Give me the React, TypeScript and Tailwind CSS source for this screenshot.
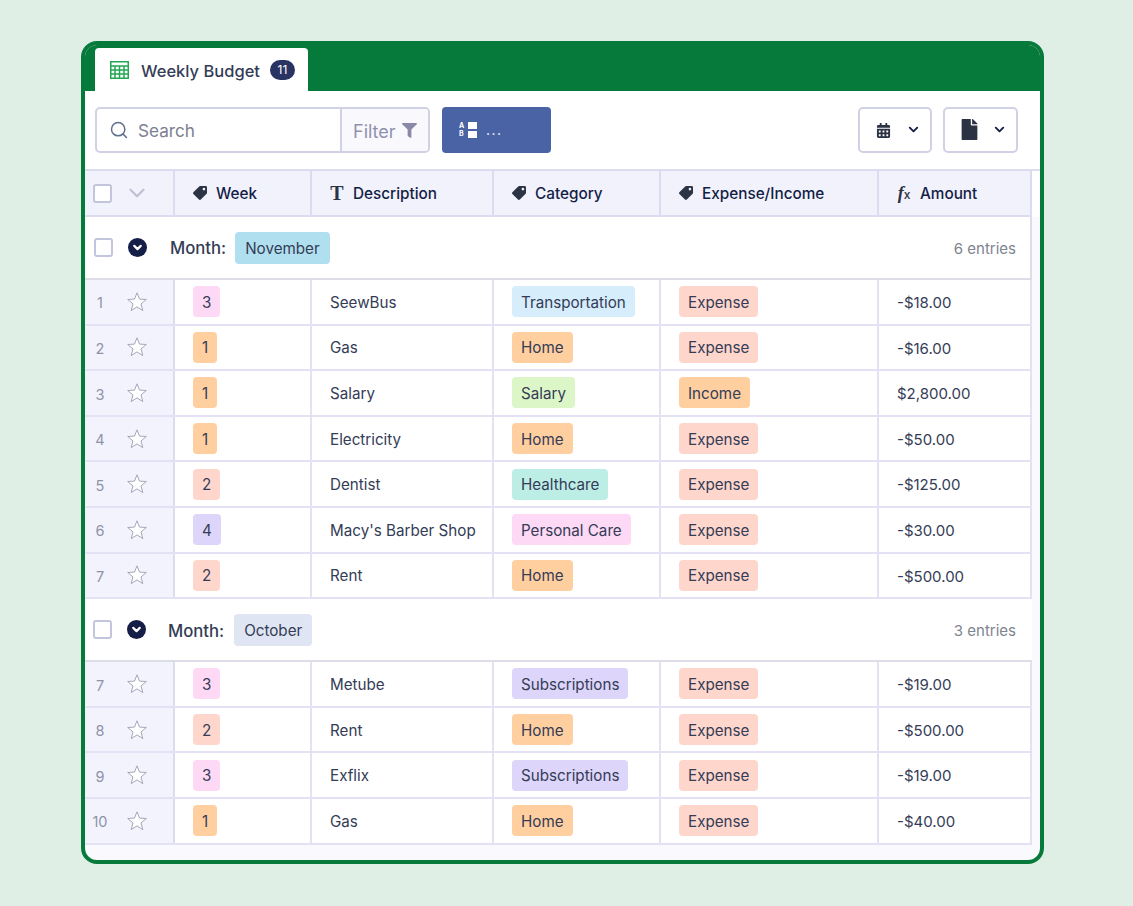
import { ChevronDown, Search } from "lucide-react";
import { FaCalendarAlt, FaFile, FaFilter, FaTag } from "react-icons/fa";

const cols = "grid grid-cols-[90px_137px_182px_167px_218px_153px]";

const pill: Record<string, string> = {
  "1": "bg-[#ffcfa0]",
  "2": "bg-[#ffd6cc]",
  "3": "bg-[#fdd9f5]",
  "4": "bg-[#ddd5fa]",
  Transportation: "bg-[#d6edfc]",
  Home: "bg-[#ffcfa0]",
  Salary: "bg-[#dcf6c8]",
  Healthcare: "bg-[#bdeee6]",
  "Personal Care": "bg-[#fdd9f5]",
  Subscriptions: "bg-[#ddd5fa]",
  Expense: "bg-[#ffd6cc]",
  Income: "bg-[#ffcfa0]",
};

const november = [
  { n: 1, week: "3", desc: "SeewBus", cat: "Transportation", type: "Expense", amount: "-$18.00" },
  { n: 2, week: "1", desc: "Gas", cat: "Home", type: "Expense", amount: "-$16.00" },
  { n: 3, week: "1", desc: "Salary", cat: "Salary", type: "Income", amount: "$2,800.00" },
  { n: 4, week: "1", desc: "Electricity", cat: "Home", type: "Expense", amount: "-$50.00" },
  { n: 5, week: "2", desc: "Dentist", cat: "Healthcare", type: "Expense", amount: "-$125.00" },
  { n: 6, week: "4", desc: "Macy's Barber Shop", cat: "Personal Care", type: "Expense", amount: "-$30.00" },
  { n: 7, week: "2", desc: "Rent", cat: "Home", type: "Expense", amount: "-$500.00" },
];

const october = [
  { n: 7, week: "3", desc: "Metube", cat: "Subscriptions", type: "Expense", amount: "-$19.00" },
  { n: 8, week: "2", desc: "Rent", cat: "Home", type: "Expense", amount: "-$500.00" },
  { n: 9, week: "3", desc: "Exflix", cat: "Subscriptions", type: "Expense", amount: "-$19.00" },
  { n: 10, week: "1", desc: "Gas", cat: "Home", type: "Expense", amount: "-$40.00" },
];

type Row = (typeof november)[number];

function Pill({ text }: { text: string }) {
  return <span className={`inline-flex h-[31px] items-center rounded-[4px] px-[9px] pt-[3px] text-[15.2px] ${pill[text]}`}>{text}</span>;
}

function Checkbox() {
  return <span className="block h-[19px] w-[19px] rounded-[3px] border-2 border-[#c3c5dc] bg-white" />;
}

function StarIcon() {
  return (
    <svg width="20" height="20" viewBox="0 0 20 20" className="ml-[12px] shrink-0">
      <polygon points="10,0.8 12.5,7.1 19.3,7.5 14,11.9 15.8,18.6 10,14.9 4.2,18.6 6,11.9 0.7,7.5 7.5,7.1" fill="#ffffff" stroke="#a5a7b8" strokeWidth="1" strokeLinejoin="round" />
    </svg>
  );
}

function TableIcon() {
  return (
    <svg width="19" height="18" viewBox="0 0 19 18" fill="none" stroke="#22a852" strokeWidth="1.5">
      <rect x="0.75" y="0.75" width="17.5" height="16.5" />
      <path d="M0.7 5h17.6M0.7 9h17.6M0.7 13h17.6M5 5v12.3M9.5 5v12.3M14 5v12.3" />
    </svg>
  );
}

function HeaderCell({ icon, label }: { icon: React.ReactNode; label: string }) {
  return (
    <div className="flex items-center gap-[9px] border-r-2 border-[#dcdcf0] pl-[18px] text-[15.3px] font-medium text-[#141e46]">
      <span className="flex w-[14px] justify-center">{icon}</span>
      <span className="pt-[2px]">{label}</span>
    </div>
  );
}

function GroupRow({ label, color, entries, boxClass, monthClass }: { label: string; color: string; entries: string; boxClass: string; monthClass: string }) {
  return (
    <div className={`flex h-[63px] items-center justify-between border-b-2 border-[#dddde8] bg-white ${boxClass}`}>
      <div className="flex items-center">
        <Checkbox />
        <span className="ml-[15px] flex h-[19px] w-[19px] items-center justify-center rounded-full bg-[#141e46]">
          <ChevronDown size={13} strokeWidth={4} className="text-white" />
        </span>
        <span className={`pt-[3px] text-[16.7px] font-medium text-[#343c56] ${monthClass}`}>Month:</span>
        <span className={`flex h-[32px] items-center rounded-[4px] px-[10px] pt-[3px] text-[15.2px] text-[#343c56] ${color}`}>{label}</span>
      </div>
      <span className="pt-[3px] text-[15px] text-[#80848f]">{entries}</span>
    </div>
  );
}

function DataRow({ row }: { row: Row }) {
  return (
    <div className={`${cols} h-[45.6px] border-b-2 border-[#e2e2f4] text-[15.2px] text-[#343c56]`}>
      <div className="flex items-center border-r-2 border-[#dcdcf0] bg-[#f3f3fd]">
        <span className="w-[30px] pt-[3px] text-center text-[14.5px] text-[#8f92a8]">{row.n}</span>
        <StarIcon />
      </div>
      <div className="flex items-center border-r-2 border-[#e2e2f4] pl-[18px]">
        <Pill text={row.week} />
      </div>
      <div className="flex items-center border-r-2 border-[#e2e2f4] pl-[18px] pt-[3px]">{row.desc}</div>
      <div className="flex items-center border-r-2 border-[#e2e2f4] pl-[18px]">
        <Pill text={row.cat} />
      </div>
      <div className="flex items-center border-r-2 border-[#e2e2f4] pl-[18px]">
        <Pill text={row.type} />
      </div>
      <div className="flex items-center border-r-2 border-[#e2e2f4] pl-[18px] pt-[3px] text-[15px]">{row.amount}</div>
    </div>
  );
}

export default function App() {
  const tag = <FaTag size={14} className="rotate-90 text-[#2c3345]" />;

  return (
    <div className="h-[906px] bg-[#dfefe5] pl-[81px] pt-[41px] font-['Inter','Liberation_Sans',sans-serif]">
      <div className="h-[823px] w-[963px] overflow-hidden rounded-[16px] border-4 border-[#067a3b] bg-[#faf9fe]">
        {/* tab bar */}
        <div className="flex h-[46px] items-end bg-[#067a3b] pl-[10px]">
          <div className="flex h-[43px] w-[213px] items-center rounded-t-[4px] bg-white pl-[15px]">
            <TableIcon />
            <span className="ml-[12px] pt-[3px] text-[16.5px] font-medium text-[#343c56]">Weekly Budget</span>
            <span className="ml-[10px] flex h-[20px] w-[25px] items-center justify-center rounded-full bg-[#293462] text-[12px] text-white">11</span>
          </div>
        </div>

        {/* toolbar */}
        <div className="flex h-[78px] items-center bg-white pb-[1px] pl-[10px] pr-[22px]">
          <div className="flex h-[46px] w-[335px] overflow-hidden rounded-[5px] border-2 border-[#d0d1e4]">
            <div className="flex flex-1 items-center pl-[12px] text-[17.2px] text-[#7c8093]">
              <Search size={20} strokeWidth={1.8} className="text-[#5f6f8c]" />
              <span className="ml-[9px] pt-[3px]">Search</span>
            </div>
            <div className="flex w-[88px] items-center border-l-2 border-[#d0d1e4] bg-[#f9f9fd] pl-[11px] text-[18px] text-[#9091ad]">
              <span className="pt-[3px]">Filter</span>
              <FaFilter size={15} className="ml-[6px] mt-[2px] text-[#8a8aa8]" />
            </div>
          </div>
          <div className="ml-[12px] flex h-[46px] w-[109px] items-center rounded-[4px] bg-[#4a63a5] pl-[17px] text-white">
            <span className="flex w-[7px] flex-col text-[7px] font-bold leading-[8px]">
              <span>A</span>
              <span>B</span>
            </span>
            <span className="ml-[2px] flex flex-col gap-[2px]">
              <span className="block h-[7px] w-[9px] bg-white" />
              <span className="block h-[7px] w-[9px] bg-white" />
            </span>
            <span className="ml-[9px] text-[14px] leading-none tracking-[1.5px]">...</span>
          </div>
          <div className="ml-auto flex h-[46px] w-[74px] items-center rounded-[5px] border-2 border-[#d0d1e4] bg-white pl-[16px]">
            <FaCalendarAlt size={15} className="mt-[1px] text-[#2c3345]" />
            <ChevronDown size={15} strokeWidth={3} className="ml-[15px] text-[#141e46]" />
          </div>
          <div className="ml-[11px] flex h-[46px] w-[75px] items-center rounded-[5px] border-2 border-[#d0d1e4] bg-white pl-[14px]">
            <FaFile size={21} className="text-[#2c3345]" />
            <ChevronDown size={15} strokeWidth={3} className="ml-[12px] text-[#141e46]" />
          </div>
        </div>

        {/* table */}
        <div className="border-t-2 border-[#dcdcf0] bg-white">
          <div className={`${cols} h-[46px] w-[947px] border-b-2 border-[#dcdcf0] bg-[#f1f2fc]`}>
            <div className="flex items-center gap-[12px] border-r-2 border-[#dcdcf0] pl-[8px]">
              <Checkbox />
              <ChevronDown size={26} strokeWidth={2.2} className="text-[#c0c2d2]" />
            </div>
            <HeaderCell icon={tag} label="Week" />
            <HeaderCell icon={<span className="font-['Liberation_Serif',serif] text-[20px] font-bold leading-none text-[#2c3345]">T</span>} label="Description" />
            <HeaderCell icon={tag} label="Category" />
            <HeaderCell icon={tag} label="Expense/Income" />
            <HeaderCell
              icon={
                <span className="whitespace-nowrap leading-none text-[#2c3345]">
                  <span className="font-['Liberation_Serif',serif] text-[18px] font-bold italic">f</span>
                  <span className="text-[12px]">x</span>
                </span>
              }
              label="Amount"
            />
          </div>
        </div>

        <div className="w-[947px] bg-white">
          <GroupRow label="November" color="bg-[#b0e0ef]" entries="6 entries" boxClass="border-r-2 border-r-[#dddde8] pl-[9px] pr-[14px]" monthClass="ml-[23px] mr-[9px]" />
          {november.map((row) => (
            <DataRow key={row.n} row={row} />
          ))}
          <GroupRow label="October" color="bg-[#dfe5f2]" entries="3 entries" boxClass="pl-[8px] pr-[16px]" monthClass="ml-[22px] mr-[10px]" />
          {october.map((row) => (
            <DataRow key={row.n} row={row} />
          ))}
        </div>
      </div>
    </div>
  );
}
